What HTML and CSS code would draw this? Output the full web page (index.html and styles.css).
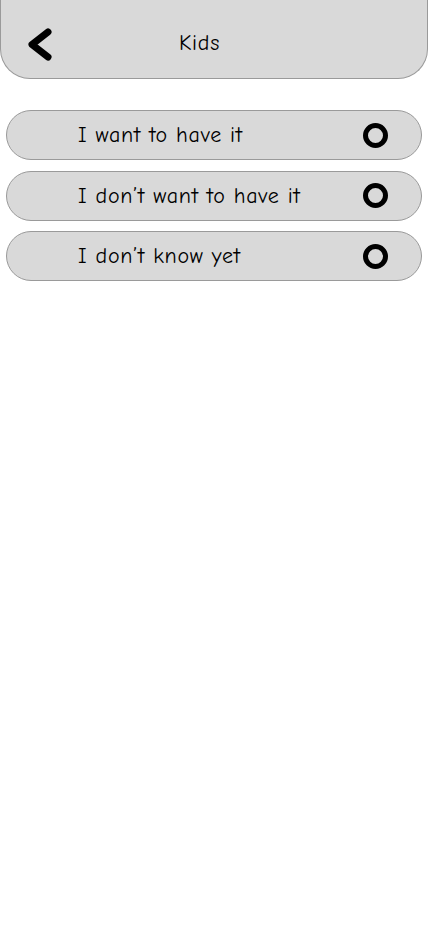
FILE: index.html
```html
<!DOCTYPE html>
<html lang="en">
<head>
<meta charset="utf-8">
<title>Kids</title>
<link rel="stylesheet" href="styles.css">
</head>
<body>
<header class="topbar">
  <button class="back" aria-label="Back">
    <svg width="30" height="40" viewBox="0 0 30 40"><polyline points="23,8 7,20.5 23,33" fill="none" stroke="#000" stroke-width="7" stroke-linecap="round" stroke-linejoin="round"/></svg>
  </button>
  <h1 class="title">Kids</h1>
</header>
<main class="options">
  <label class="option"><span class="option-text">I want to have it</span><span class="radio"></span></label>
  <label class="option"><span class="option-text">I don’t want to have it</span><span class="radio"></span></label>
  <label class="option"><span class="option-text">I don’t know yet</span><span class="radio"></span></label>
</main>
</body>
</html>
```
FILE: styles.css
```css
* { box-sizing: border-box; }
body {
  margin: 0;
  background: #fff;
  font-family: "Comic Neue", Lato, "Open Sans", sans-serif;
  color: #000;
}
.topbar {
  height: 79px;
  background: #d9d9d9;
  border: 1px solid #9a9a9a;
  border-top: none;
  border-radius: 0 0 30px 30px;
  display: flex;
  align-items: center;
  padding: 0 0 0 24px;
}
.back {
  background: none;
  border: none;
  padding: 0;
  width: 30px;
  height: 40px;
  display: flex;
  margin-top: 10px;
}
.title {
  margin: 0 0 0 124px;
  font-size: 22px;
  font-weight: 400;
  padding-top: 7px;
  letter-spacing: 0.75px;
}
.options {
  margin-top: 31px;
  padding: 0 6px;
  display: flex;
  flex-direction: column;
  gap: 10.5px;
}
.option {
  height: 50px;
  background: #d9d9d9;
  border: 1px solid #9a9a9a;
  border-radius: 25px;
  display: flex;
  align-items: center;
  padding: 0 33px 0 71px;
  font-size: 22px;
  letter-spacing: 0.75px;
}
.option-text { flex: 1; }
.radio {
  width: 25px;
  height: 25px;
  border: 5px solid #000;
  border-radius: 50%;
}
```
